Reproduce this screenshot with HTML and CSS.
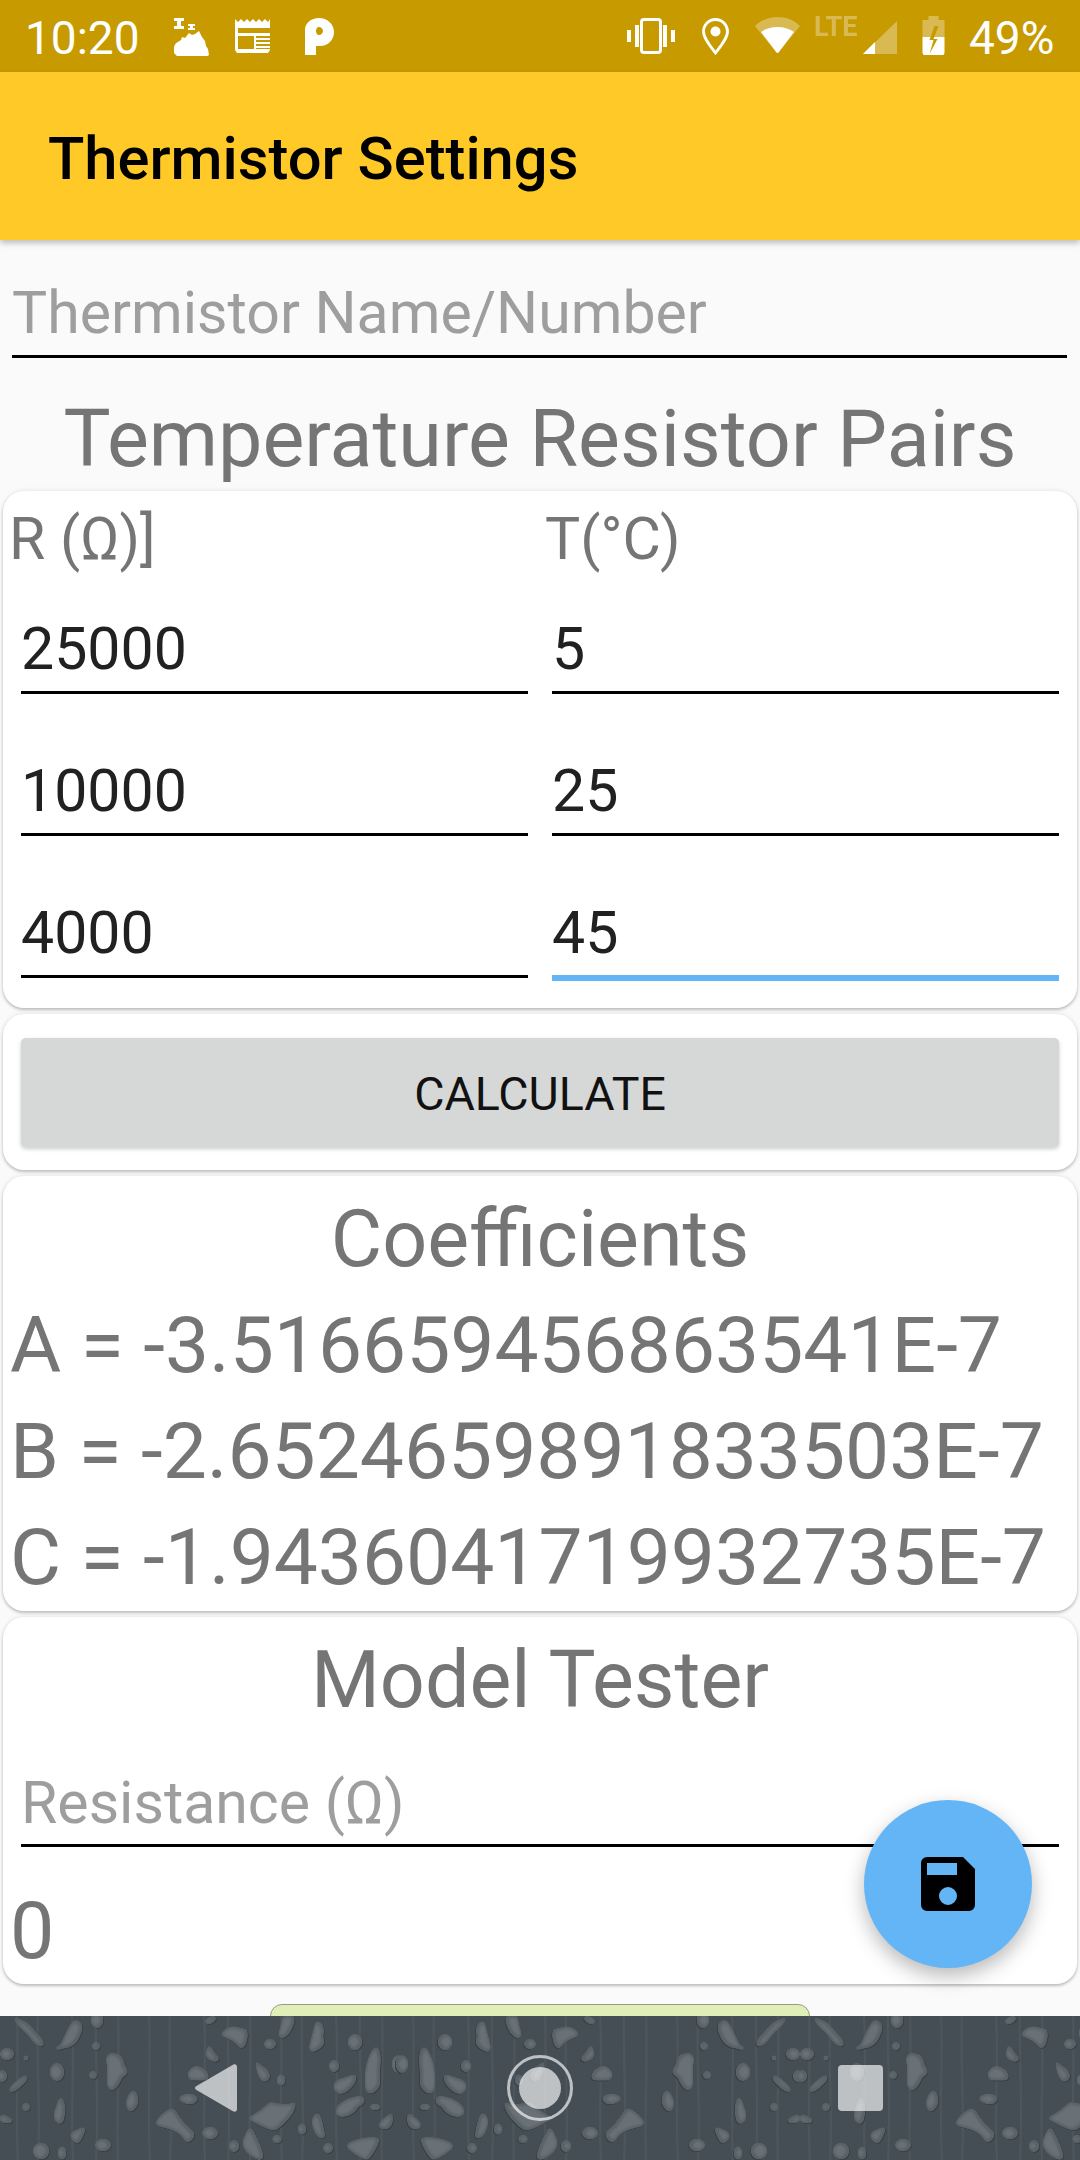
FILE: index.html
```html
<!DOCTYPE html>
<html lang="en">
<head>
<meta charset="utf-8">
<title>Thermistor Settings</title>
<link rel="stylesheet" href="styles.css">
</head>
<body>
<div class="phone">
  <header class="statusbar">
    <span class="clock">10:20</span>
    <svg class="ic ic-cloud" viewBox="0 0 36 38"><path d="M0 0h10v3H7v5h3v3H0V8h3V3H0zM14 6h7v2h-2v2h2v2h-7v-2h2V8h-2z" fill="#fff"/><path d="M0 29c1-4 4-5 7-7l1-3 3 1 4-5 3 2 3-1 4-3 3 6 3 4 1 5 2 3 1 6-3 2H22l-4-1-3 1-3-1H3l-3-3z" fill="#fff"/></svg>
    <svg class="ic ic-cal" viewBox="0 0 38 34"><path d="M0 0l3 3 3-3 3 3 3-3 3 3 3-3 3 3 3-3 3 3 3-3 3 3 2-3v31l-2 3H2l-2-3z" fill="#fff"/><path d="M3 9h32v5H3zM3 17h16v13H3zM21 17h14v2H21zM21 21h14v2H21zM21 25h14v2H21zM21 29h14v1H21z" fill="#c79a00"/></svg>
    <svg class="ic ic-p" viewBox="0 0 29 37"><path d="M0 12C0 5 6 0 14 0s15 6 15 14-6 14-14 14h-4v9H0zM11 13c0 2 1 4 3 4s4-2 4-4-2-4-4-4-3 2-3 4z" fill="#fff"/></svg>
    <span class="status-spacer"></span>
    <svg class="ic ic-vib" viewBox="0 0 48 36"><path d="M0 12h4v12H0zM8 7h4v22H8zM36 7h4v22h-4zM44 12h4v12h-4z" fill="#fff"/><rect x="14.500" y="1.500" width="19" height="33" rx="2.500" fill="none" stroke="#fff" stroke-width="3"/></svg>
    <svg class="ic ic-loc" viewBox="0 0 27 37"><path d="M13.500 35C8 28 1.500 20 1.500 13.500a12 12 0 0 1 24 0C25.500 20 19 28 13.500 35z" fill="none" stroke="#fff" stroke-width="2.800"/><circle cx="13.500" cy="13.500" r="5" fill="#fff"/></svg>
    <svg class="ic ic-wifi" viewBox="0 0 45 37"><path d="M0 9C6 3 14 0 22.500 0S39 3 45 9L23.500 35.500a1.500 1.500 0 0 1-2 0z" fill="#fff" fill-opacity=".32"/><path d="M6 15c4-3 10-5 16.500-5S35 12 39 15L23.500 35.500a1.500 1.500 0 0 1-2 0z" fill="#fff"/></svg>
    <span class="lte">LTE</span>
    <svg class="ic ic-sig" viewBox="0 0 34 34"><path d="M34 1v33H0z" fill="#fff" fill-opacity=".32"/><path d="M12 22v12H0z" fill="#fff"/></svg>
    <svg class="ic ic-bat" viewBox="0 0 22 39"><path d="M6 0h10v4h6v17H0V4h6z" fill="#fff" fill-opacity=".32"/><path d="M0 21h22v16l-1 2H1l-1-2z" fill="#fff"/><path d="M12 10l-5 14h4l-4 14 8-15h-4l5-13z" fill="#c79a00"/></svg>
    <span class="battery">49%</span>
  </header>
  <div class="appbar"><h1 class="apptitle">Thermistor Settings</h1></div>
  <main class="content">
    <div class="namefield">Thermistor Name/Number</div>
    <h2 class="pairs-title">Temperature Resistor Pairs</h2>
    <section class="card card-pairs">
      <div class="pair-head"><span>R (Ω)]</span><span>T(°C)</span></div>
      <div class="pair-grid">
        <div class="field">25000</div><div class="field">5</div>
        <div class="field">10000</div><div class="field">25</div>
        <div class="field">4000</div><div class="field field-focus">45</div>
      </div>
    </section>
    <section class="card card-btn"><div class="btn">CALCULATE</div></section>
    <section class="card card-coef">
      <div class="card-title">Coefficients</div>
      <div class="coef">A = -3.516659456863541E-7</div>
      <div class="coef">B = -2.6524659891833503E-7</div>
      <div class="coef">C = -1.9436041719932735E-7</div>
    </section>
    <section class="card card-model">
      <div class="card-title">Model Tester</div>
      <div class="resfield">Resistance (Ω)</div>
      <div class="result">0</div>
    </section>
    <div class="greenbtn"></div>
  </main>
  <nav class="navbar">
    <svg class="texture" width="1080" height="144" viewBox="0 0 1080 144" aria-hidden="true">
      <defs>
        <filter id="wet" x="-3%" y="-8%" width="106%" height="116%" color-interpolation-filters="sRGB">
          <feGaussianBlur in="SourceAlpha" stdDeviation="2" result="blur"/>
          <feColorMatrix in="blur" type="matrix" values="0 0 0 0 .35  0 0 0 0 .385  0 0 0 0 .405  0 0 0 12 -4.500" result="goo"/>
          <feMorphology in="goo" operator="erode" radius="1.500" result="thin"/>
          <feOffset in="thin" dx="-1" dy="-.5" result="thinoff"/>
          <feGaussianBlur in="thinoff" stdDeviation="1" result="soft"/>
          <feColorMatrix in="soft" type="matrix" values="0 0 0 0 .42  0 0 0 0 .45  0 0 0 0 .47  0 0 0 .9 0" result="shine"/>
          <feComposite in="shine" in2="goo" operator="in" result="shineclip"/>
          <feOffset in="goo" dx="1.200" dy="1" result="shift"/>
          <feColorMatrix in="shift" type="matrix" values="0 0 0 0 .23  0 0 0 0 .26  0 0 0 0 .28  0 0 0 1 0" result="edge"/>
          <feMerge>
            <feMergeNode in="edge"/>
            <feMergeNode in="goo"/>
            <feMergeNode in="shineclip"/>
          </feMerge>
        </filter>
        <pattern id="streak" width="132" height="144" patternUnits="userSpaceOnUse">
          <path d="M17 0c2 40-2 90 1 144M38 0c-2 50 3 90 0 144M72 0c3 50-2 90 1 144M96 0c-1 40 3 100 0 144M118 0c2 50-2 100 0 144" stroke="#4d565c" stroke-width="2" fill="none"/>
        </pattern>
        <g id="drops" fill="#000" filter="url(#wet)">
          <path d="M12 0C20 4 28 6 32 12 36 18 44 22 44 30 40 32 36 28 32 24 28 16 18 12 12 0z"/>
          <path d="M60 30C64 24 66 14 74 4 82 4 84 12 80 18 78 26 72 32 62 32 56 38 50 30 60 30z"/>
          <ellipse cx="97" cy="4" rx="6" ry="8"/>
          <ellipse cx="7" cy="38" rx="7" ry="6"/>
          <circle cx="26" cy="42" r="3"/>
          <ellipse cx="57" cy="56" rx="7" ry="9"/>
          <ellipse cx="2" cy="60" rx="5" ry="6"/>
          <path d="M26 58C22 62 10 68 8 76 14 78 24 68 28 62z"/>
          <circle cx="96" cy="30" r="4"/>
          <circle cx="93" cy="59" r="4"/>
          <path d="M108 38C118 36 124 40 124 50 130 54 128 60 122 60 120 68 114 76 110 74 104 68 110 52 106 44z"/>
          <path d="M60 80C66 84 66 98 62 108 54 108 52 100 56 92z"/>
          <path d="M133 74C140 78 140 92 130 96 124 90 126 80 133 74z"/>
          <circle cx="26" cy="91" r="4"/>
          <path d="M0 98C6 100 12 102 14 106 8 108 2 106 0 106z"/>
          <path d="M172 92C178 96 180 106 194 116 196 120 190 128 186 126 182 116 170 112 158 110 152 108 160 98 172 92z"/>
          <ellipse cx="210" cy="117" rx="8" ry="6"/>
          <path d="M86 110C84 118 82 122 78 128 72 124 68 120 72 116z"/>
          <ellipse cx="103" cy="129" rx="8" ry="6"/>
          <circle cx="41" cy="135" r="8"/>
          <ellipse cx="62" cy="137" rx="4" ry="7"/>
          <path d="M196 50C206 52 210 58 208 64L190 64C186 60 188 52 196 50z"/>
          <path d="M178 82C184 76 196 78 198 82 196 90 184 90 178 82z"/>
          <path d="M216 0C218 4 212 8 208 8 200 8 206 0 216 0z"/>
          <path d="M228 12C236 8 244 16 246 12 250 20 244 36 240 32 236 24 226 22 222 20 220 18 224 14 228 12z"/>
          <path d="M208 28C212 30 214 40 220 42 218 48 210 46 206 40z"/>
          <path d="M250 20C254 34 254 46 262 50 272 56 272 64 264 66 256 62 256 44 250 20z"/>
          <ellipse cx="270" cy="28" rx="6" ry="5"/>
          <path d="M282 0L294 0C296 6 288 24 280 22 276 20 284 6 282 0z"/>
          <path d="M316 5C322 4 326 14 322 22 328 26 320 34 312 36 306 36 312 24 316 5z"/>
          <ellipse cx="355" cy="26" rx="7" ry="8"/>
          <path d="M270 86C280 88 290 92 296 84 296 96 288 104 276 114 266 114 256 106 246 102 254 100 264 92 270 86z"/>
          <ellipse cx="334" cy="50" rx="5" ry="6"/>
          <ellipse cx="281" cy="64" rx="4" ry="6"/>
          <path d="M376 30C384 36 378 54 380 68 376 78 368 80 366 74 364 60 366 40 376 30z"/>
          <path d="M356 58C358 64 350 76 340 78 332 76 332 66 338 64z"/>
          <path d="M362 80C366 84 366 88 358 90 356 96 348 102 338 100 332 96 338 82 362 80z"/>
          <path d="M316 96C324 100 322 116 326 120 320 128 312 114 312 104z"/>
          <path d="M250 110C256 120 266 140 262 144 248 142 240 130 244 122z"/>
          <path d="M380 122C366 120 350 124 346 130 354 138 360 142 368 144L376 132z"/>
          <path d="M392 96C394 106 392 116 380 112 376 106 386 102 392 96z"/>
          <ellipse cx="398" cy="48" rx="6" ry="9"/>
          <ellipse cx="302" cy="113" rx="4" ry="6"/>
          <ellipse cx="277" cy="123" rx="5" ry="4"/>
          <ellipse cx="328" cy="132" rx="5" ry="5"/>
          <ellipse cx="234" cy="130" rx="5" ry="6"/>
          <ellipse cx="375" cy="91" rx="6" ry="3"/>
        </g>
      </defs>
      <rect width="1080" height="144" fill="#454e55"/>
      <rect width="1080" height="144" fill="url(#streak)"/>
      <use href="#drops"/>
      <use href="#drops" transform="translate(800 0) scale(-1 1)"/>
      <use href="#drops" x="800"/>
    </svg>
    <div class="navicons">
      <svg class="nav-back" viewBox="0 0 42 48"><path d="M1.500 26c-2-1-2-3 0-4L38 .7C40 -.4 42 .5 42 3v42c0 2.500-2 3.400-4 2.300z"/></svg>
      <svg class="nav-home" viewBox="0 0 66 66"><circle class="home-ring" cx="33" cy="33" r="31.500"/><circle cx="33" cy="33" r="21"/></svg>
      <svg class="nav-rec" viewBox="0 0 45 46"><rect width="45" height="46" rx="4"/></svg>
    </div>
  </nav>
  <button class="fab" aria-label="Save">
    <svg viewBox="0 0 54 54" class="fab-ic"><path d="M6 0h36l12 12v36a6 6 0 0 1-6 6H6a6 6 0 0 1-6-6V6a6 6 0 0 1 6-6zM6 6v12h30V6zM27 30a9 9 0 1 0 0 18 9 9 0 0 0 0-18z" fill-rule="evenodd"/></svg>
  </button>
</div>
</body>
</html>
```
FILE: styles.css
```css
* { box-sizing: border-box; margin: 0; padding: 0; }
html, body { width: 1080px; height: 2160px; overflow: hidden; }
body { font-family: Roboto, sans-serif; background: #fafafa; }
.phone { position: relative; width: 1080px; height: 2160px; display: flex; flex-direction: column; overflow: hidden; background: #fafafa; }
.statusbar { height: 72px; flex: none; background: #c79a00; color: #fff; display: flex; align-items: flex-start; padding-left: 25px; padding-right: 26px; position: relative; }
.clock { font-size: 46px; line-height: 54px; margin-top: 11px; width: 113px; }
.ic { flex: none; display: block; }
.ic-cloud { width: 36px; height: 38px; margin: 18px 0 0 36px; }
.ic-cal { width: 38px; height: 34px; margin: 19px 0 0 25px; }
.ic-p { width: 29px; height: 37px; margin: 18px 0 0 32px; }
.status-spacer { flex: 1; }
.ic-vib { width: 48px; height: 36px; margin: 18px 0 0 0; }
.ic-loc { width: 27px; height: 37px; margin: 18px 0 0 27px; }
.ic-wifi { width: 45px; height: 37px; margin: 17px 0 0 26px; }
.lte { font-size: 27px; font-weight: 700; line-height: 30px; margin: 12px 0 0 14px; width: 42px; opacity: .32; }
.ic-sig { width: 34px; height: 34px; margin: 20px 0 0 7px; }
.ic-bat { width: 23px; height: 39px; margin: 16px 0 0 25px; }
.battery { font-size: 46px; line-height: 54px; margin: 11px 0 0 24px; width: 85px; }
.appbar { height: 168px; flex: none; background: #ffca28; display: flex; align-items: center; padding: 5px 0 0 48px; box-shadow: 0 3px 6px rgba(0,0,0,.25); position: relative; z-index: 2; }
.apptitle { font-size: 59.7px; font-weight: 500; color: #000; line-height: 70px; }
.content { flex: 1; min-height: 0; overflow: hidden; display: flex; flex-direction: column; }
.namefield { margin: 0 13px 0 12px; height: 118px; border-bottom: 3px solid #000; font-size: 59px; color: #9e9e9e; padding-top: 38px; line-height: 70px; flex: none; }
.pairs-title { flex: none; font-size: 79px; font-weight: 400; color: #757575; text-align: center; line-height: 87px; margin-top: 38px; margin-bottom: 8px; }
.card { flex: none; margin: 0 3px 6px; background: #fff; border-radius: 21px; box-shadow: 0 2px 3px rgba(0,0,0,.2), 0 0 5px rgba(0,0,0,.1); }
.card-pairs { height: 517px; padding: 14px 18px 0; }
.pair-head { display: grid; grid-template-columns: 536px 1fr; height: 69px; font-size: 59px; line-height: 68px; color: #757575; margin-left: -12px; }
.pair-grid { display: grid; grid-template-columns: 507px 507px; column-gap: 24px; row-gap: 22px; }
.field { height: 120px; padding-top: 41px; font-size: 59px; line-height: 68px; color: #212121; border-bottom: 3px solid #000; }
.field-focus { border-bottom: 6px solid #64b5f6; height: 123px; }
.card-btn { height: 156px; padding: 24px 18px 23px; }
.btn { height: 109px; background: #d6d7d7; border-radius: 5px; box-shadow: 0 2px 4px rgba(0,0,0,.2); font-size: 46.5px; font-weight: 450; line-height: 112px; text-align: center; color: #111; }
.card-coef { height: 435px; padding-top: 10px; }
.card-title { font-size: 79px; line-height: 106px; color: #757575; text-align: center; }
.coef { font-size: 78.5px; line-height: 106px; color: #757575; padding-left: 7px; white-space: nowrap; }
.card-model { height: 367px; padding-top: 10px; display: flex; flex-direction: column; }
.resfield { margin: 0 18px; height: 114px; padding: 35px 0 0; border-bottom: 3px solid #000; font-size: 59px; line-height: 70px; color: #9e9e9e; }
.result { font-size: 79px; line-height: 106px; color: #757575; padding-left: 7px; margin-top: 31px; }
.greenbtn { flex: none; width: 540px; height: 40px; margin: 14px auto 0; background: #e0eeb8; border-radius: 12px 12px 0 0; border: 1px solid #9a9a8a; }
.navbar { position: relative; height: 144px; flex: none; overflow: hidden; }
.texture { display: block; }
.navicons { position: absolute; inset: 0; }
.navicons svg { position: absolute; fill: rgba(255,255,255,.65); }
.navicons .home-ring { fill: none; stroke: rgba(255,255,255,.65); stroke-width: 3; }
.nav-back { left: 195px; top: 48px; width: 42px; height: 48px; }
.nav-home { left: 507px; top: 39px; width: 66px; height: 66px; }
.nav-rec { left: 838px; top: 49px; width: 45px; height: 46px; }
.fab { position: absolute; left: 864px; top: 1800px; width: 168px; height: 168px; border: none; border-radius: 50%; background: #64b5f6; box-shadow: 0 8px 20px rgba(0,0,0,.28); display: flex; align-items: center; justify-content: center; z-index: 3; }
.fab-ic { width: 54px; height: 54px; fill: #000; display: block; }
```
